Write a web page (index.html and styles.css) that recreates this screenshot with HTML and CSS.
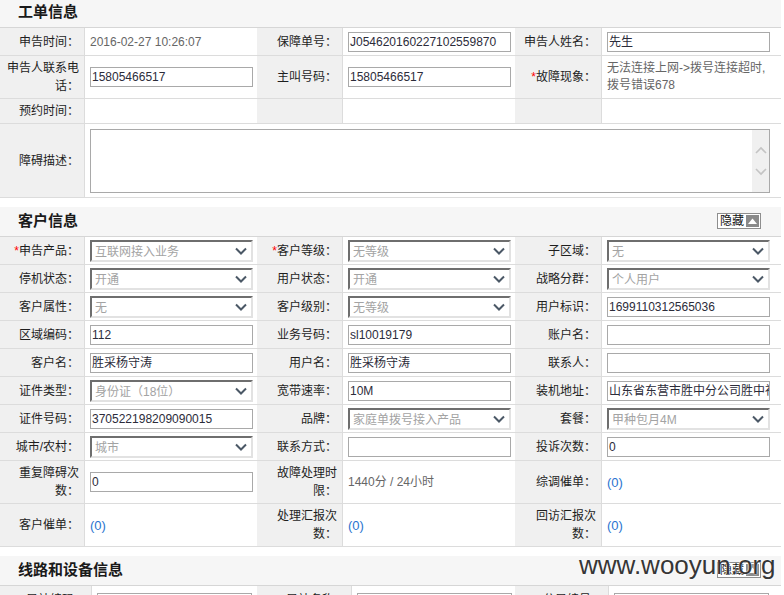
FILE: index.html
```html
<!DOCTYPE html>
<html lang="zh-CN">
<head>
<meta charset="utf-8">
<title>工单信息</title>
<link rel="stylesheet" href="styles.css">
</head>
<body>
<div class="page">

  <section class="sec sec-order">
    <div class="sec-head head-first"><h2>工单信息</h2></div>
    <div class="grid grid-order">
      <div class="lb">申告时间：</div>
      <div class="val"><span class="txt">2016-02-27 10:26:07</span></div>
      <div class="lb">保障单号：</div>
      <div class="val"><div class="inp">J054620160227102559870</div></div>
      <div class="lb">申告人姓名：</div>
      <div class="val"><div class="inp">先生</div></div>

      <div class="lb">申告人联系电话：</div>
      <div class="val"><div class="inp">15805466517</div></div>
      <div class="lb">主叫号码：</div>
      <div class="val"><div class="inp">15805466517</div></div>
      <div class="lb"><span class="req">*</span>故障现象：</div>
      <div class="val"><span class="txt multi">无法连接上网-&gt;拨号连接超时,拨号错误678</span></div>

      <div class="lb">预约时间：</div>
      <div class="val"></div>
      <div class="lb"></div>
      <div class="val"></div>
      <div class="lb"></div>
      <div class="val"></div>

      <div class="lb">障碍描述：</div>
      <div class="val span5">
        <div class="ta">
          <div class="ta-body"></div>
          <div class="ta-scroll">
            <svg width="12" height="8" viewBox="0 0 12 8"><path d="M1 7 L6 2 L11 7" fill="none" stroke="#c4c4c4" stroke-width="1.6"/></svg>
            <svg width="12" height="8" viewBox="0 0 12 8"><path d="M1 1 L6 6 L11 1" fill="none" stroke="#c4c4c4" stroke-width="1.6"/></svg>
          </div>
        </div>
      </div>
    </div>
  </section>

  <section class="sec">
    <div class="sec-head">
      <h2>客户信息</h2>
      <span class="toggle">隐藏<i class="tri-box"><svg width="9" height="6" viewBox="0 0 9 6"><path d="M0 6 L4.5 0.5 L9 6 Z" fill="#fff"/></svg></i></span>
    </div>
    <div class="grid grid-cust">
      <div class="lb"><span class="req">*</span>申告产品：</div>
      <div class="val"><div class="sel"><span>互联网接入业务</span><svg class="chev" width="12" height="8" viewBox="0 0 12 8"><path d="M1 1.5 L6 6.5 L11 1.5" fill="none" stroke="#4b5866" stroke-width="2"/></svg></div></div>
      <div class="lb"><span class="req">*</span>客户等级：</div>
      <div class="val"><div class="sel"><span>无等级</span><svg class="chev" width="12" height="8" viewBox="0 0 12 8"><path d="M1 1.5 L6 6.5 L11 1.5" fill="none" stroke="#4b5866" stroke-width="2"/></svg></div></div>
      <div class="lb">子区域：</div>
      <div class="val"><div class="sel"><span>无</span><svg class="chev" width="12" height="8" viewBox="0 0 12 8"><path d="M1 1.5 L6 6.5 L11 1.5" fill="none" stroke="#4b5866" stroke-width="2"/></svg></div></div>

      <div class="lb">停机状态：</div>
      <div class="val"><div class="sel"><span>开通</span><svg class="chev" width="12" height="8" viewBox="0 0 12 8"><path d="M1 1.5 L6 6.5 L11 1.5" fill="none" stroke="#4b5866" stroke-width="2"/></svg></div></div>
      <div class="lb">用户状态：</div>
      <div class="val"><div class="sel"><span>开通</span><svg class="chev" width="12" height="8" viewBox="0 0 12 8"><path d="M1 1.5 L6 6.5 L11 1.5" fill="none" stroke="#4b5866" stroke-width="2"/></svg></div></div>
      <div class="lb">战略分群：</div>
      <div class="val"><div class="sel"><span>个人用户</span><svg class="chev" width="12" height="8" viewBox="0 0 12 8"><path d="M1 1.5 L6 6.5 L11 1.5" fill="none" stroke="#4b5866" stroke-width="2"/></svg></div></div>

      <div class="lb">客户属性：</div>
      <div class="val"><div class="sel"><span>无</span><svg class="chev" width="12" height="8" viewBox="0 0 12 8"><path d="M1 1.5 L6 6.5 L11 1.5" fill="none" stroke="#4b5866" stroke-width="2"/></svg></div></div>
      <div class="lb">客户级别：</div>
      <div class="val"><div class="sel"><span>无等级</span><svg class="chev" width="12" height="8" viewBox="0 0 12 8"><path d="M1 1.5 L6 6.5 L11 1.5" fill="none" stroke="#4b5866" stroke-width="2"/></svg></div></div>
      <div class="lb">用户标识：</div>
      <div class="val"><div class="inp">1699110312565036</div></div>

      <div class="lb">区域编码：</div>
      <div class="val"><div class="inp">112</div></div>
      <div class="lb">业务号码：</div>
      <div class="val"><div class="inp">sl10019179</div></div>
      <div class="lb">账户名：</div>
      <div class="val"><div class="inp"></div></div>

      <div class="lb">客户名：</div>
      <div class="val"><div class="inp">胜采杨守涛</div></div>
      <div class="lb">用户名：</div>
      <div class="val"><div class="inp">胜采杨守涛</div></div>
      <div class="lb">联系人：</div>
      <div class="val"><div class="inp"></div></div>

      <div class="lb">证件类型：</div>
      <div class="val"><div class="sel"><span>身份证（18位）</span><svg class="chev" width="12" height="8" viewBox="0 0 12 8"><path d="M1 1.5 L6 6.5 L11 1.5" fill="none" stroke="#4b5866" stroke-width="2"/></svg></div></div>
      <div class="lb">宽带速率：</div>
      <div class="val"><div class="inp">10M</div></div>
      <div class="lb">装机地址：</div>
      <div class="val"><div class="inp">山东省东营市胜中分公司胜中社区</div></div>

      <div class="lb">证件号码：</div>
      <div class="val"><div class="inp">370522198209090015</div></div>
      <div class="lb">品牌：</div>
      <div class="val"><div class="sel"><span>家庭单拨号接入产品</span><svg class="chev" width="12" height="8" viewBox="0 0 12 8"><path d="M1 1.5 L6 6.5 L11 1.5" fill="none" stroke="#4b5866" stroke-width="2"/></svg></div></div>
      <div class="lb">套餐：</div>
      <div class="val"><div class="sel"><span>甲种包月4M</span><svg class="chev" width="12" height="8" viewBox="0 0 12 8"><path d="M1 1.5 L6 6.5 L11 1.5" fill="none" stroke="#4b5866" stroke-width="2"/></svg></div></div>

      <div class="lb">城市/农村：</div>
      <div class="val"><div class="sel"><span>城市</span><svg class="chev" width="12" height="8" viewBox="0 0 12 8"><path d="M1 1.5 L6 6.5 L11 1.5" fill="none" stroke="#4b5866" stroke-width="2"/></svg></div></div>
      <div class="lb">联系方式：</div>
      <div class="val"><div class="inp"></div></div>
      <div class="lb">投诉次数：</div>
      <div class="val"><div class="inp">0</div></div>

      <div class="lb">重复障碍次数：</div>
      <div class="val"><div class="inp">0</div></div>
      <div class="lb">故障处理时限：</div>
      <div class="val"><span class="txt">1440分 / 24小时</span></div>
      <div class="lb">综调催单：</div>
      <div class="val"><a class="cnt">(0)</a></div>

      <div class="lb">客户催单：</div>
      <div class="val"><a class="cnt">(0)</a></div>
      <div class="lb">处理汇报次数：</div>
      <div class="val"><a class="cnt">(0)</a></div>
      <div class="lb">回访汇报次数：</div>
      <div class="val"><a class="cnt">(0)</a></div>
    </div>
  </section>

  <section class="sec">
    <div class="sec-head">
      <h2>线路和设备信息</h2>
      <span class="toggle">隐藏<i class="tri-box"><svg width="9" height="6" viewBox="0 0 9 6"><path d="M0 6 L4.5 0.5 L9 6 Z" fill="#fff"/></svg></i></span>
    </div>
    <div class="grid grid-line">
      <div class="lb">局站编码：</div>
      <div class="val"><div class="inp wide"></div></div>
      <div class="lb">局站名称：</div>
      <div class="val"><div class="inp mid"></div></div>
      <div class="lb">分局编号：</div>
      <div class="val"><div class="inp mid"></div></div>

      <div class="lb">设备名称：</div>
      <div class="val"><div class="inp wide"></div></div>
      <div class="lb">设备端口：</div>
      <div class="val"><div class="inp mid"></div></div>
      <div class="lb">线路编号：</div>
      <div class="val"><div class="inp mid"></div></div>
    </div>
  </section>

  <div class="watermark">www.wooyun.org</div>
</div>
</body>
</html>
```

FILE: styles.css
```css
html, body {
  margin: 0;
  padding: 0;
  background: #fff;
}

body {
  font-family: "Liberation Sans", "Noto Sans CJK SC", sans-serif;
  font-size: 12px;
  color: #222;
}

.page {
  position: relative;
  width: 781px;
}

.sec + .sec {
  margin-top: 9px;
}

.sec-head {
  height: 30px;
  box-sizing: border-box;
  background: #f6f6f6;
  border-bottom: 1px solid #d6d6d6;
  display: flex;
  align-items: center;
  justify-content: space-between;
  padding: 0 20px 1px 18px;
}

.head-first {
  height: 28px;
  padding-bottom: 3px;
}

.sec-head h2 {
  margin: 0;
  font-size: 15px;
  font-weight: bold;
  line-height: 18px;
  color: #1a1a1a;
}

.toggle {
  display: inline-flex;
  align-items: center;
  height: 16px;
  box-sizing: border-box;
  border: 1px solid #8e8e8e;
  background: #fff;
  padding: 0 1px 0 2px;
  font-size: 12px;
  line-height: 14px;
  color: #111;
  gap: 2px;
}

.tri-box {
  display: inline-flex;
  align-items: center;
  justify-content: center;
  width: 13px;
  height: 12px;
  background: #8a8a8a;
}

.grid {
  display: grid;
}

.grid-order {
  grid-template-columns: 85px 172px 86px 172px 87px 179px;
  grid-template-rows: 28px 43px 25px 74px;
}

.grid-cust {
  grid-template-columns: 85px 172px 86px 172px 87px 179px;
  grid-template-rows: repeat(8, 28px) 43px 43px;
}

.grid-line {
  grid-template-columns: 92px 165px 95px 163px 94px 172px;
  grid-auto-rows: 28px;
}

.lb {
  background: #f0f0f0;
  border-right: 1px solid #dcdcdc;
  border-bottom: 1px solid #dcdcdc;
  display: flex;
  align-items: center;
  justify-content: flex-end;
  text-align: right;
  padding: 0 5px 0 2px;
  line-height: 18px;
  color: #1e1e1e;
  min-width: 0;
}

.val {
  border-bottom: 1px solid #dcdcdc;
  display: flex;
  align-items: center;
  padding: 0 6px 0 5px;
  min-width: 0;
}

.span5 {
  grid-column: span 5;
}

.req {
  color: #ff0000;
}

.txt {
  color: #666;
  line-height: 18px;
}

.multi {
  line-height: 17px;
}

.cnt {
  color: #2a74cf;
  text-decoration: none;
  font-size: 13px;
}

.inp {
  width: 163px;
  height: 20px;
  box-sizing: border-box;
  border: 1px solid #a9a9a9;
  background: #fff;
  padding: 0 1px;
  line-height: 18px;
  color: #2c2c3a;
  white-space: nowrap;
  overflow: hidden;
  flex: none;
}

.grid-line .inp.wide {
  width: 155px;
}

.grid-line .inp.mid {
  width: 155px;
}

.grid-line .val {
  align-items: flex-end;
}

.sel {
  width: 163px;
  height: 22px;
  box-sizing: border-box;
  border-style: solid;
  border-width: 2px;
  border-color: #6e6e6e #e2e2e2 #e2e2e2 #6e6e6e;
  background: #fff;
  display: flex;
  align-items: center;
  justify-content: space-between;
  padding: 0 4px 0 3px;
  color: #a3a3a3;
  white-space: nowrap;
  overflow: hidden;
  flex: none;
}

.chev {
  flex: none;
}

.ta {
  width: 680px;
  height: 64px;
  box-sizing: border-box;
  border: 1px solid #a9a9a9;
  background: #fff;
  display: flex;
}

.ta-body {
  flex: 1;
}

.ta-scroll {
  width: 17px;
  background: #f0f0f0;
  display: flex;
  flex-direction: column;
  align-items: center;
  justify-content: center;
  gap: 14px;
}

.watermark {
  position: absolute;
  left: 579px;
  top: 550px;
  font-family: "Liberation Sans", sans-serif;
  font-size: 26px;
  line-height: 30px;
  color: #363636;
  text-shadow: 0 0 2px #fff, 0 0 1px #fff;
  white-space: nowrap;
}
```
